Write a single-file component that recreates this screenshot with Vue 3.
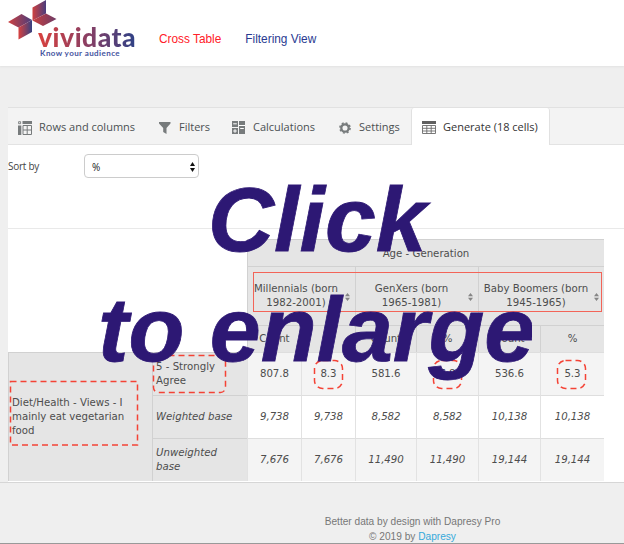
<script setup>
const generations = [
  ['Millennials (born', '1982-2001)'],
  ['GenXers (born', '1965-1981)'],
  ['Baby Boomers (born', '1945-1965)'],
]
const measures = ['Count', '%', 'Count', '%', 'Count', '%']
const rows = [
  { label: '5 - Strongly Agree', marked: true, values: ['807.8', '8.3', '581.6', '6.8', '536.6', '5.3'] },
  { label: 'Weighted base', base: true, values: ['9,738', '9,738', '8,582', '8,582', '10,138', '10,138'] },
  { label: 'Unweighted base', base: true, narrow: true, shaded: true, values: ['7,676', '7,676', '11,490', '11,490', '19,144', '19,144'] },
]
</script>

<template>
  <div class="page">
    <header>
      <div class="logo">
        <svg class="mark" width="50" height="40" viewBox="0 0 50 40">
          <defs>
            <linearGradient id="ga" x1="0" x2="1"><stop offset="0" stop-color="#cf403f" /><stop offset="1" stop-color="#493d7d" /></linearGradient>
            <linearGradient id="gb" x1="0" x2="1"><stop offset="0" stop-color="#d9413e" /><stop offset="1" stop-color="#364181" /></linearGradient>
            <linearGradient id="gc" x1="0" x2="1"><stop offset="0" stop-color="#c8403f" /><stop offset="1" stop-color="#6d3a66" /></linearGradient>
          </defs>
          <path d="M0 22 13.5 14 24 20 10.5 27.5Z" fill="url(#ga)" />
          <path d="M10.5 27.5 24 20V32L10.5 39.5Z" fill="url(#gb)" />
          <path d="M24.5 7.5 38 0V13.5L24.5 20.5Z" fill="url(#ga)" />
          <path d="M24.5 20.5 38 13.5 48.5 19 35 26Z" fill="url(#gc)" />
        </svg>
        <span class="name">vividata</span>
        <span class="tag">Know your audience</span>
      </div>
      <nav><a class="on">Cross Table</a><a>Filtering View</a></nav>
    </header>

    <main>
      <div class="tabs">
        <div class="tab t1">
          <svg width="14" height="14" viewBox="0 0 14 14" fill="none" stroke="#777b7c">
            <path d="M.6.7h2v2h-2z" stroke-width=".9" /><path d="M4.5 0H14v3H4.5zM0 4.5h3.3V14H0z" fill="#777b7c" stroke="none" />
            <path d="M5 4.5h8.5v9H5zM9.2 4.5v9M5 9h8.5" />
          </svg><span>Rows and columns</span>
        </div>
        <div class="tab t2">
          <svg width="12" height="12" viewBox="0 0 12 12"><path d="M0 0h11.5v1.5L7.5 6v6L4.2 10V6L0 1.5z" fill="#777b7c" /></svg><span>Filters</span>
        </div>
        <div class="tab t3">
          <svg width="13" height="13" viewBox="0 0 13 13">
            <path d="M0 0h6v6H0zM7 0h6v13H7zM0 7h6v6H0z" fill="#777b7c" />
            <path d="M1.2 2.8h3.6M7 4.5h6M8.2 7.5h3.6M1.2 10h3.6M3 8.2v3.6" stroke="#fff" fill="none" />
          </svg><span>Calculations</span>
        </div>
        <div class="tab t4">
          <svg width="12" height="12" viewBox="0 0 12 12" fill="none" stroke="#777b7c">
            <circle cx="6" cy="6" r="3.7" stroke-width="2.3" /><circle cx="6" cy="6" r="5.1" stroke-width="1.5" stroke-dasharray="2 2.005" />
          </svg><span>Settings</span>
        </div>
        <div class="tab t5 active">
          <svg width="14" height="13" viewBox="0 0 14 13" fill="none" stroke="#6b6b6b">
            <path d="M0 0h14v3H0z" fill="#606060" stroke="none" /><path d="M.5 4.5h13v8H.5zM.5 7.3h13M.5 10h13M4.8 4.5v8M9.2 4.5v8" stroke-width=".9" />
          </svg><span>Generate (18 cells)</span>
        </div>
      </div>

      <div class="sort">
        <label>Sort by</label>
        <div class="select">
          <span>%</span>
          <svg width="5" height="10" viewBox="0 0 5 10"><path d="M2.5 0 5 4H0zM2.5 10 0 6h5z" fill="#111" /></svg>
        </div>
      </div>

      <div class="grid">
        <div class="corner"></div>
        <div class="cell head top">Age - Generation</div>
        <div v-for="(g, i) in generations" :key="g[0]" class="cell head gen">
          <span>{{ g[0] }}<br />{{ g[1] }}</span>
          <svg width="5" height="8" viewBox="0 0 5 8"><path d="M2.5 0 5 3.3H0zM2.5 8 0 4.7h5z" fill="#858585" /></svg>
        </div>
        <div v-for="(m, i) in measures" :key="i" class="cell head">{{ m }}</div>
        <div class="cell head question">
          <span>Diet/Health - Views - I mainly eat vegetarian food</span>
          <svg class="mark-box" width="130" height="67"><rect x="1.5" y="1.5" width="127" height="63.5" /></svg>
        </div>
        <template v-for="r in rows" :key="r.label">
          <div class="cell head label" :class="{ base: r.base, narrow: r.narrow }">
            <span>{{ r.label }}</span>
            <svg v-if="r.marked" class="mark-box" width="75" height="40"><rect x="1.5" y="1.5" width="72" height="37" rx="5" /></svg>
          </div>
          <div v-for="(v, i) in r.values" :key="i" class="cell value" :class="{ base: r.base, shaded: r.marked || r.shaded }">
            {{ v }}
            <svg v-if="r.marked && i % 2" class="mark-box" :class="{ wide: i > 1 }" width="31" height="31"><rect x="1.5" y="1.5" width="28" height="28" rx="8" /></svg>
          </div>
        </template>
        <div class="outline"></div>
      </div>
    </main>

    <footer>Better data by design with Dapresy Pro<br />© 2019 by <a>Dapresy</a></footer>
    <div class="overlay"><div class="click">Click</div><div class="enlarge">to enlarge</div></div>
  </div>
</template>

<style>
body { margin: 0; overflow: hidden; }
</style>

<style scoped>
* { box-sizing: border-box; }
.page { position: relative; width: 624px; height: 544px; overflow: hidden; background: #efefef; border-bottom: 1px solid #999; white-space: nowrap; }
header { display: flex; height: 66px; background: #fff; box-shadow: 0 1px 2px #e2e2e2; }
.logo { position: relative; width: 159px; }
.mark { position: absolute; left: 8px; top: 0; }
.name { position: absolute; left: 38px; top: 21px; font: 900 26.5px/32px Lato, sans-serif; letter-spacing: .5px; color: transparent; background: linear-gradient(90deg, #d9413e, #8b3f63 50%, #2e4186); -webkit-background-clip: text; background-clip: text; }
.tag { position: absolute; left: 40px; top: 47px; font: 700 8px/12px Lato, sans-serif; letter-spacing: .42px; color: #4453a0; }
nav { display: flex; gap: 24px; padding-top: 31px; font: 11.85px/16px "Liberation Sans", Arial, sans-serif; color: #283a91; }
nav .on { color: #ff2029; }
main { height: 375px; margin: 41px 0 0 8px; background: #fff; }
.tabs { display: flex; height: 38px; background: #f3f3f3; border-top: 1px solid #e1e1e1; border-bottom: 1px solid #e3e3e3; font: 11px/16px "Open Sans", sans-serif; color: #4b5052; }
.tab { display: flex; align-items: center; gap: 7px; height: 37px; padding-left: 10px; }
.tab svg { flex: none; margin-top: 2px; }
.t1 { width: 141px; }
.t2 { width: 73px; gap: 8px; }
.t3 { width: 107px; gap: 8px; }
.t4 { width: 82px; gap: 8px; }
.t5 { width: 139px; }
.active { background: #fff; border-left: 1px solid #e1e1e1; border-right: 1px solid #e1e1e1; border-radius: 3px 3px 0 0; color: #333; }
.sort { display: flex; height: 84px; padding-top: 9px; border-bottom: 1px solid #e9e9e9; font: 10px/14px "Open Sans", sans-serif; color: #444; }
label { width: 76px; padding-top: 5px; letter-spacing: -.25px; }
.select { display: flex; align-items: center; justify-content: space-between; width: 115px; height: 24px; padding: 2px 3px 0 7px; border: 1px solid #ccc; border-radius: 4px; color: #222; }
.grid { position: relative; display: grid; width: 596px; margin-top: 10px; grid-template-columns: 144px 95px 54px 54px 61px 62px 62px 64px; grid-template-rows: 27px 59px 27px 43px 43px 43px; font: 10.2px/13.7px "DejaVu Sans", Verdana, sans-serif; color: #4d4d4d; border-right: 1px solid #e0e0e0; }
.corner { grid-column: 1 / 3; grid-row: 1 / 4; }
.cell { position: relative; display: flex; align-items: center; justify-content: center; border-left: 1px solid #e2e2e2; border-top: 1px solid #dedede; }
.head { background: #e5e5e5; border-color: #d1d1d1; }
.top { grid-column: 3 / 9; padding-top: 1px; }
.gen { grid-column: span 2; text-align: center; }
.gen span { margin-right: 11px; }
.gen svg { position: absolute; right: 5px; top: 26px; }
.question { grid-row: span 3; justify-content: flex-start; padding-left: 3px; white-space: normal; }
.question span { width: 125px; }
.label { justify-content: flex-start; padding-left: 3px; white-space: normal; }
.narrow span { width: 80px; }
.base { font-style: italic; }
.value { background: #fff; }
.shaded.value { background: #f4f4f4; }
.mark-box { position: absolute; fill: none; stroke: #f44336; stroke-width: 1.5; stroke-dasharray: 6 4; }
.question .mark-box { left: 0; top: 27px; }
.label .mark-box { left: -1px; top: 1px; }
.value .mark-box { left: 11px; top: 6px; }
.value .mark-box.wide { left: 15px; }
.outline { position: absolute; left: 245px; top: 33px; width: 349px; height: 40px; border: 1px solid #f36458; }
footer { height: 62px; padding: 31px 0 0 201px; border-top: 1px solid #d6d6d6; font: 10.15px/15px "Liberation Sans", Arial, sans-serif; color: #777; text-align: center; }
footer a { color: #36a9da; }
.overlay { position: absolute; left: 98px; top: 164px; width: 434px; height: 232px; overflow: hidden; font: italic 700 91.5px/110px "Liberation Sans", Helvetica, Arial, sans-serif; color: #2d1874; -webkit-text-stroke: .8px #2d1874; }
.click { padding-left: 110px; }
</style>
